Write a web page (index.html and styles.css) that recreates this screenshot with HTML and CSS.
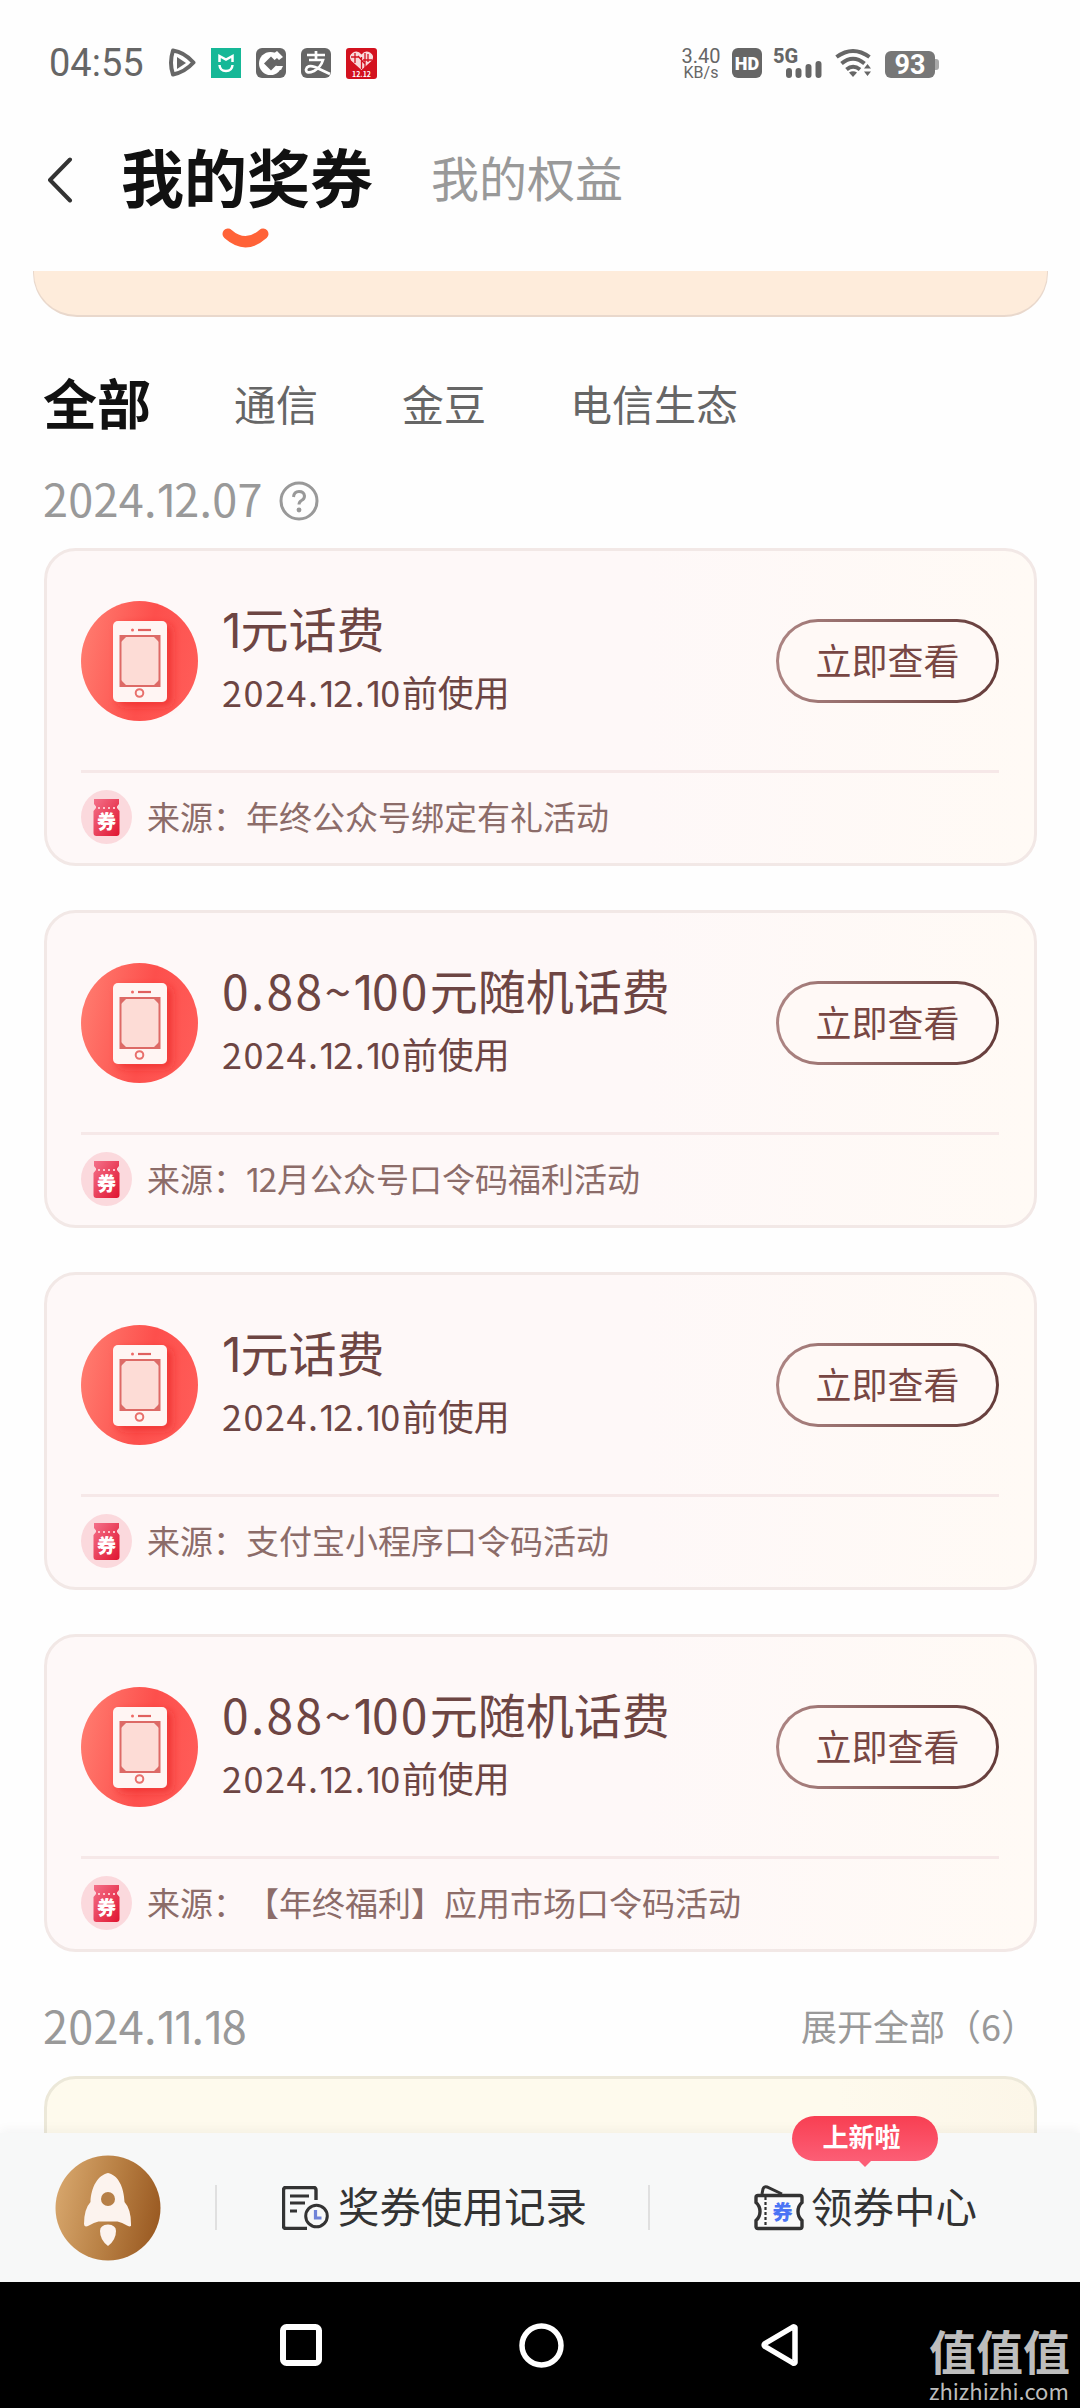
FILE: index.html
```html
<!DOCTYPE html>
<html lang="zh-CN">
<head>
<meta charset="utf-8">
<title>我的奖券</title>
<link rel="stylesheet" href="styles.css">
</head>
<body>
<svg class="defs" width="0" height="0" aria-hidden="true">
  <defs>
    <linearGradient id="coral" x1="0" y1=".4" x2="1" y2=".6"><stop offset="0" stop-color="#ff7a6e"/><stop offset=".55" stop-color="#fd4f4c"/><stop offset="1" stop-color="#ff5c58"/></linearGradient>
    <linearGradient id="red" x1="0" y1="0" x2="1" y2="1"><stop offset="0" stop-color="#f4718a"/><stop offset="1" stop-color="#e0142f"/></linearGradient>
    <linearGradient id="gold" x1="0" y1=".4" x2="1" y2=".6"><stop offset="0" stop-color="#d6a56b"/><stop offset=".5" stop-color="#b98145"/><stop offset="1" stop-color="#9a5a22"/></linearGradient>
    <filter id="soft" x="-30%" y="-30%" width="160%" height="160%"><feDropShadow dx="5" dy="4" stdDeviation="4" flood-color="#e51f22" flood-opacity=".55"/></filter>
  </defs>
  <symbol id="phone" viewBox="0 0 117 120">
    <ellipse cx="58.500" cy="60" rx="58.500" ry="60" fill="url(#coral)"/>
    <rect x="32" y="20" width="54" height="81" rx="5" fill="#fff5f3" filter="url(#soft)"/>
    <circle cx="51.500" cy="29" r="1.500" fill="#ef6a66"/>
    <path d="M57 29h13" stroke="#e0605e" stroke-width="2.200"/>
    <rect x="39.500" y="35" width="39" height="50" fill="#fddcd6" stroke="#dd6a66" stroke-width="2"/>
    <path d="M40 41v-5.500h5.500zM78 41v-5.500h-5.500zM40 79v5.500h5.500zM78 79v5.500h-5.500z" fill="#dd6a66"/>
    <circle cx="58.500" cy="92" r="3.800" fill="none" stroke="#e8706c" stroke-width="2"/>
  </symbol>
  <symbol id="coupon" viewBox="0 0 51 54">
    <ellipse cx="25.500" cy="27" rx="25.500" ry="27" fill="#fbd9dd"/>
    <path d="M13 9h25v5l-2 2.500v1.500l2.500 3V43q0 3-3 3h-20q-3 0-3-3V21l2.500-3v-1.500l-2-2.500z" fill="url(#red)"/>
    <path d="M17 18h18" stroke="#fbc4cc" stroke-width="2" stroke-dasharray="2 3"/>
    <text x="25.500" y="39" text-anchor="middle" font-size="19" font-weight="900" fill="#fff">券</text>
  </symbol>
</svg>

<header class="status">
  <span class="time">04:55</span>
  <svg class="app" width="30" height="30" viewBox="0 0 30 30"><path d="M7 2.500Q3 15 7 26.500Q19 24 27.500 14.500Q18 4 7 2.500z" fill="none" stroke="#666" stroke-width="4" stroke-linejoin="round"/><path d="M11 9v12l9-6z" fill="#666"/></svg>
  <svg class="app" width="30" height="30" viewBox="0 0 30 30"><path fill="#16b897" d="M0 0h30v30H0z"/><path d="M8.500 14V8l6.500 3.500L21.500 8v6M8.500 17q.5 6 6.500 6 6 0 6.500-6" fill="none" stroke="#fff" stroke-width="2.500"/></svg>
  <svg class="app" width="30" height="30" viewBox="0 0 30 30"><rect width="30" height="30" rx="6" fill="#666"/><circle cx="14.500" cy="15.500" r="11.500" fill="#fff"/><path d="M15 8.500l7 7-7 7-7-7z" fill="#666"/><path d="M15 15l9-7.500 6 7.500-3 6z" fill="#666"/><path d="M17 6l4-3 6 6-4 3zM21 18h6l-2 4-5-1z" fill="#fff"/></svg>
  <svg class="app" width="30" height="30" viewBox="0 0 30 30"><rect width="30" height="30" rx="6" fill="#666"/><path d="M6 7h18M15 3v9M8 12h14q-2 7-9 11-8 3.500-8-1.500 1-5 9-2.500L29 26" fill="none" stroke="#fff" stroke-width="2.700"/></svg>
  <svg class="app" width="31" height="31" viewBox="0 0 31 31"><rect width="31" height="31" rx="3" fill="#d3121f"/><path d="M15.500 22L5 12.500q-3-5 2-8 5-2.500 8.500 2 3.500-4.500 8.500-2 5 3 2 8z" fill="#f9dada"/><path d="M9 5v10M5 9h8M12 8l7 8M19 5v15M15.500 9v12M22 6v8M17 12h9" stroke="#d3121f" stroke-width="1.300"/><text x="15.500" y="29" text-anchor="middle" font-size="7" font-weight="700" fill="#fff">12.12</text></svg>
  <div class="speed"><span>3.40</span><small>KB/s</small></div>
  <span class="hd">HD</span>
  <svg class="signal" width="50" height="32" viewBox="0 0 50 32"><text x="0" y="16" font-size="20" font-weight="800" fill="#666">5G</text><path d="M16 24v4M25.500 24v4M35.500 20v8M45.500 17v11" stroke="#666" stroke-width="6" stroke-linecap="round"/></svg>
  <svg class="wifi" width="38" height="30" viewBox="0 0 38 30"><g fill="none" stroke="#666" stroke-width="4"><path d="M1.500 9Q18 -3 34.500 9"/><path d="M6.500 15.500Q18 6 29.500 15.500"/><path d="M11.500 21.500Q18 16 25 21.500"/></g><path d="M14 24.500q4-2.500 8 0L18 29z" fill="#666"/><path d="M29 20.500l3.500-4.500 3.500 4.500zM29 23.500l3.500 4.500 3.500-4.500z" fill="#666"/></svg>
  <span class="battery">93</span>
</header>

<nav class="titlebar">
  <svg class="back" width="26" height="46" viewBox="0 0 26 46"><path d="M23 2.500L3 23l20 20.500" fill="none" stroke="#333" stroke-width="4" stroke-linecap="round" stroke-linejoin="round"/></svg>
  <h1>我的奖券<svg class="smile" width="47" height="21" viewBox="0 0 47 21"><path d="M6 6Q23.500 21.500 41 6" fill="none" stroke="#ff6237" stroke-width="11" stroke-linecap="round"/></svg></h1>
  <span class="other">我的权益</span>
</nav>

<main class="content">
  <div class="banner"></div>
  <div class="tabs"><b>全部</b><span>通信</span><span>金豆</span><span>电信生态</span></div>
  <div class="date first"><span class="day">2024.<i>1</i>2.07</span>
    <svg width="40" height="40" viewBox="0 0 40 40"><circle cx="20" cy="20" r="18" fill="none" stroke="#999" stroke-width="3"/><path d="M14.500 16q.5-5.500 5.500-5.500t5.500 4.500q0 3-3 4.500-2.500 1.500-2.500 4" fill="none" stroke="#999" stroke-width="3"/><circle cx="20" cy="29" r="2.400" fill="#999"/></svg>
  </div>
  <section class="cards">
    <article class="card">
      <div class="top"><svg class="ic" width="117" height="120"><use href="#phone"/></svg><div class="info"><h2><i>1</i>元话费</h2><p><span class="until">2024.<i>1</i>2.<i>1</i>0</span>前使用</p></div><a class="btn">立即查看</a></div>
      <div class="source"><svg width="51" height="54"><use href="#coupon"/></svg><span>来源：年终公众号绑定有礼活动</span></div>
    </article>
    <article class="card">
      <div class="top"><svg class="ic" width="117" height="120"><use href="#phone"/></svg><div class="info"><h2><span class="amount">0.88~<i>1</i>00</span>元随机话费</h2><p><span class="until">2024.<i>1</i>2.<i>1</i>0</span>前使用</p></div><a class="btn">立即查看</a></div>
      <div class="source"><svg width="51" height="54"><use href="#coupon"/></svg><span>来源：<i>1</i>2月公众号口令码福利活动</span></div>
    </article>
    <article class="card">
      <div class="top"><svg class="ic" width="117" height="120"><use href="#phone"/></svg><div class="info"><h2><i>1</i>元话费</h2><p><span class="until">2024.<i>1</i>2.<i>1</i>0</span>前使用</p></div><a class="btn">立即查看</a></div>
      <div class="source"><svg width="51" height="54"><use href="#coupon"/></svg><span>来源：支付宝小程序口令码活动</span></div>
    </article>
    <article class="card">
      <div class="top"><svg class="ic" width="117" height="120"><use href="#phone"/></svg><div class="info"><h2><span class="amount">0.88~<i>1</i>00</span>元随机话费</h2><p><span class="until">2024.<i>1</i>2.<i>1</i>0</span>前使用</p></div><a class="btn">立即查看</a></div>
      <div class="source"><svg width="51" height="54"><use href="#coupon"/></svg><span>来源：【年终福利】应用市场口令码活动</span></div>
    </article>
  </section>
  <div class="date second"><span class="day">2024.<i>1</i><i>1</i>.<i>1</i>8</span><span class="more">展开全部（6）</span></div>
  <div class="next"></div>
</main>

<footer class="actions">
  <svg class="rocket" width="106" height="106" viewBox="0 0 106 106"><circle cx="53" cy="53" r="52.500" fill="url(#gold)"/><path d="M53 18C43 20 36 32 35.500 47Q29 54 29 69q0 4 5 1.500 5-3 9.500-4h19q4.500 1 9.500 4 5 2.500 4-1.500 0-15-6.500-22C69 32 63 20 53 18z" fill="#fcf3ee"/><circle cx="53" cy="44" r="7" fill="#b67f47"/><path d="M45 76q0-6 8-6.500 8 .5 8 6.500 0 9-8 15-8-6-8-15z" fill="#fcf3ee"/></svg>
  <span class="rule"></span>
  <a class="action records">
    <svg width="48" height="44" viewBox="0 0 48 44"><path d="M34 14V4q0-2.500-2.500-2.500H4Q1.500 1.500 1.500 4v36q0 2.500 2.500 2.500h21" fill="none" stroke="#333" stroke-width="3.400"/><path d="M8 10h19M8 17h15M8 25h7" stroke="#333" stroke-width="3"/><circle cx="34.500" cy="30" r="10.800" fill="#f7f8f8" stroke="#333" stroke-width="3"/><path d="M33.500 24v8h6" fill="none" stroke="#6f83d8" stroke-width="3.200"/></svg>
    <span>奖券使用记录</span>
  </a>
  <span class="rule"></span>
  <a class="action center">
    <svg width="50" height="46" viewBox="0 0 50 46"><path d="M8 9l1-5q1-3 4-2l15 7" fill="none" stroke="#333" stroke-width="3"/><path d="M4 10.500h42q2 0 2 2v5q-4 3.500-4 9t4 9v6q0 2-2 2H4q-2 0-2-2v-6q4-3.500 4-9t-4-9v-5q0-2 2-2z" fill="#fafafa" stroke="#333" stroke-width="3.400"/><path d="M11.500 12v31" stroke="#333" stroke-width="2.200" stroke-dasharray="3 2"/><text x="28.500" y="34.500" text-anchor="middle" font-size="20" font-weight="900" fill="#4b74f5">券</text></svg>
    <span>领券中心</span>
    <em class="badge">上新啦</em>
  </a>
</footer>

<div class="sysnav">
  <svg width="42" height="42" viewBox="0 0 42 42"><rect x="3" y="3" width="36" height="36" rx="3.500" fill="none" stroke="#fff" stroke-width="6"/></svg>
  <svg width="45" height="45" viewBox="0 0 45 45"><circle cx="22.500" cy="22.500" r="19.500" fill="none" stroke="#fff" stroke-width="5.500"/></svg>
  <svg width="40" height="44" viewBox="0 0 40 44"><path d="M34 4.500v35q-1 1-2 .5L4 23.500q-1.500-1.500 0-3L32 4q1-.5 2 .5z" fill="none" stroke="#fff" stroke-width="5.500" stroke-linejoin="round"/></svg>
  <div class="mark"><b>值值值</b><span>zhizhizhi.com</span></div>
</div>
</body>
</html>
```
FILE: styles.css
```css
* { box-sizing: border-box; }
body {
  margin: 0;
  width: 1080px;
  height: 2408px;
  display: flex;
  flex-direction: column;
  background: #fefefe;
  font-family: "Noto Sans CJK SC", "Noto Sans", sans-serif;
  text-spacing-trim: space-all;
  color: #111;
  overflow: hidden;
}
svg { display: block; flex: none; }
.defs { position: absolute; }
h1, h2, p { margin: 0; font-weight: 400; }

/* narrow figure one */
i {
  display: inline-block;
  width: .385em;
  font-family: Inter, sans-serif;
  font-style: normal;
  line-height: 1;
  text-align: center;
  letter-spacing: 0;
}

/* status bar */
.status {
  height: 126px;
  padding: 0 145px 0 49px;
  display: flex;
  align-items: center;
  color: #666;
}
.time { width: 117px; font: 400 38px/40px Roboto, sans-serif; }
.app { margin-right: 15px; }
.speed {
  margin-left: auto;
  width: 40px;
  display: flex;
  flex-direction: column;
  align-items: center;
  font: 400 20px/18px Roboto, sans-serif;
}
.speed small { font-size: 16px; line-height: 15px; }
.hd {
  margin-left: 11px;
  width: 30px;
  height: 30px;
  border-radius: 6px;
  background: #666;
  color: #fff;
  text-align: center;
  font: 900 18px/31px Roboto, sans-serif;
}
.signal { margin-left: 11px; overflow: visible; }
.signal text { font-family: Roboto, sans-serif; }
.wifi { margin-left: 12px; }
.battery {
  position: relative;
  margin: 3px 0 0 12px;
  width: 50px;
  height: 27px;
  border-radius: 6px;
  background: #777;
  color: #fff;
  text-align: center;
  font: 700 27px/28px Roboto, sans-serif;
}
.battery::after {
  content: "";
  position: absolute;
  left: 50px;
  top: 8px;
  width: 4px;
  height: 11px;
  border-radius: 0 3px 3px 0;
  background: #aaa;
}

/* title bar */
.titlebar {
  height: 145px;
  padding: 0 47px 47px;
  display: flex;
  align-items: center;
}
.back { margin-top: 10px; }
h1 {
  position: relative;
  margin-left: 48px;
  font-size: 63px;
  line-height: 98px;
  font-weight: 700;
}
.smile { position: absolute; left: 101px; top: 102px; }
.other { margin: 1px 0 0 58px; font-size: 48px; line-height: 96px; color: #999; }

/* scrolling content */
.content { height: 1862px; overflow: hidden; }
.banner {
  margin: 0 32px 0 33px;
  height: 46px;
  border-radius: 0 0 44px 44px;
  border: solid #e9d8cc;
  border-width: 0 1px 2px;
  background: #feecdb;
}
.tabs {
  height: 126px;
  padding: 43px 0 0 43px;
  display: flex;
  align-items: center;
  font-size: 42px;
  line-height: 84px;
  color: #666;
}
.tabs b { width: 191px; font-size: 54px; color: #111; }
.tabs span { margin-top: 2px; }
.tabs span + span { margin-left: 84px; }
.date {
  padding: 0 43px;
  display: flex;
  align-items: center;
  color: #999;
}
.date.first { height: 105px; padding-top: 4px; gap: 18px; }
.date.second { height: 124px; padding-top: 23px; justify-content: space-between; }
.day { font-size: 45px; line-height: 60px; letter-spacing: .3px; white-space: nowrap; }
.first .day { width: 218px; }
.first svg { margin-top: 6px; }
.more { font-size: 36px; line-height: 60px; }

.cards { padding: 0 43px 0 44px; display: grid; gap: 44.5px; }
.card {
  height: 317.5px;
  padding: 0 35px 0 34px;
  border: 3px solid #f2e8e6;
  border-radius: 32px;
  background: linear-gradient(90deg, #fef8f8 60%, #fffaf5);
}
.top {
  height: 222px;
  display: flex;
  align-items: center;
  border-bottom: 3px solid #f6e8e8;
}
.info { margin-left: 24px; padding-bottom: 5px; color: #6d4543; }
h2 { font-size: 48px; line-height: 66px; white-space: nowrap; }
.amount { letter-spacing: 2.3px; }
.info p { font-size: 36px; line-height: 62px; white-space: nowrap; }
.until { letter-spacing: 1.5px; }
.btn {
  margin-left: auto;
  width: 223px;
  height: 84px;
  border: 3px solid transparent;
  border-radius: 42px;
  background: linear-gradient(#fff9f6, #fff9f6) padding-box, linear-gradient(90deg, #ad8583, #643b39) border-box;
  color: #784744;
  text-align: center;
  font-size: 36px;
  line-height: 75px;
}
.source {
  height: 88px;
  display: flex;
  align-items: center;
  gap: 15px;
  font-size: 33px;
  color: #8c6c69;
}
.source span { margin-top: -3px; }
.next {
  margin: 0 43px 0 44px;
  height: 317px;
  border: 3px solid #ece8d9;
  border-radius: 32px;
  background: linear-gradient(90deg, #fefaed 80%, #fcf6e8);
}

/* bottom actions */
.actions {
  position: relative;
  height: 149px;
  padding-left: 55px;
  display: flex;
  align-items: center;
  background: #f7f8f8;
  box-shadow: 0 -4px 10px rgba(0, 0, 0, .04);
}
.rule { width: 2px; height: 45px; background: #e0e0e0; }
.rocket { margin-right: 54px; }
.action {
  position: relative;
  display: flex;
  align-items: center;
  font-size: 41.500px;
  line-height: 60px;
  color: #333;
}
.records { margin: 0 61px 0 65px; gap: 8px; }
.center { margin-left: 104px; gap: 7px; }
.action span { margin-top: -6px; }
.badge {
  position: absolute;
  left: 38px;
  top: -65px;
  width: 146px;
  height: 45px;
  padding-right: 7px;
  border-radius: 23px;
  background: linear-gradient(#f83f52, #fc5e76);
  color: #fff;
  text-align: center;
  font: 700 26px/39px "Noto Sans CJK SC", sans-serif;
}
.badge::after {
  content: "";
  position: absolute;
  left: 66px;
  top: 44px;
  border: solid transparent;
  border-top-color: #fc5e76;
  border-width: 7px 7px 0;
}

/* system navigation */
.sysnav {
  position: relative;
  height: 126px;
  display: flex;
  justify-content: center;
  align-items: center;
  gap: 197px;
  background: #000;
}
.mark {
  position: absolute;
  left: 929px;
  top: 40px;
  display: flex;
  flex-direction: column;
  color: #bdbdbd;
}
.mark b { font-size: 47px; line-height: 56px; }
.mark span { font-size: 22px; line-height: 24px; }
```
